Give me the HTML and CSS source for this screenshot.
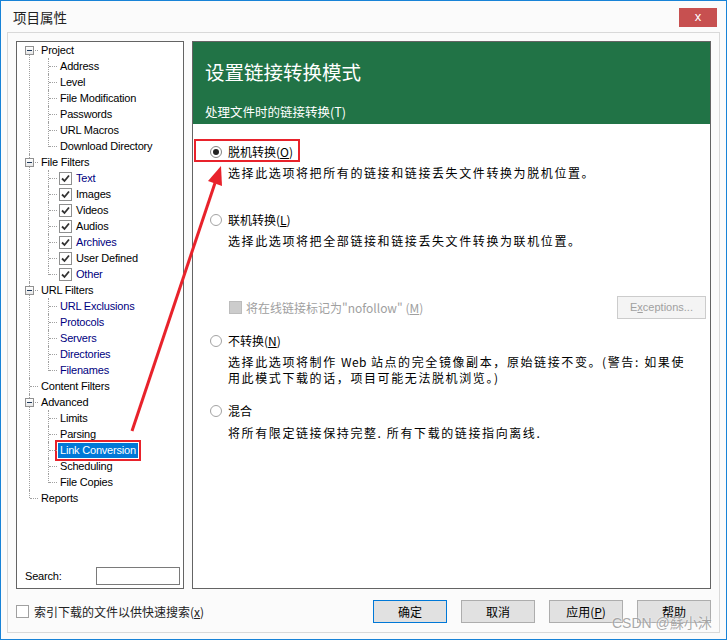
FILE: index.html
```html
<!DOCTYPE html>
<html lang="zh-CN">
    <head>
        <meta charset="UTF-8">
        <meta name="viewport" content="width=device-width, initial-scale=1.0">
        <title>项目属性</title>
        <link rel="stylesheet" href="styles.css">
    </head>
    <body>
        <div class="window">
            <div class="titlebar">
                <span class="title">项目属性</span>
                <span class="close">x</span>
            </div>
            <div class="frame">
                <div class="panes">
                    <div class="tree-box">
                        <ul class="tree">
                            <li><div class="row"><span class="exp"></span><span class="lbl">Project</span></div>
                                <ul class="kids">
                                    <li><span class="lbl">Address</span></li>
                                    <li><span class="lbl">Level</span></li>
                                    <li><span class="lbl">File Modification</span></li>
                                    <li><span class="lbl">Passwords</span></li>
                                    <li><span class="lbl">URL Macros</span></li>
                                    <li><span class="lbl">Download Directory</span></li>
                                </ul>
                            </li>
                            <li><div class="row"><span class="exp"></span><span class="lbl">File Filters</span></div>
                                <ul class="kids">
                                    <li class="chk"><span class="cb"></span><span class="lbl blue">Text</span></li>
                                    <li class="chk"><span class="cb"></span><span class="lbl">Images</span></li>
                                    <li class="chk"><span class="cb"></span><span class="lbl">Videos</span></li>
                                    <li class="chk"><span class="cb"></span><span class="lbl">Audios</span></li>
                                    <li class="chk"><span class="cb"></span><span class="lbl blue">Archives</span></li>
                                    <li class="chk"><span class="cb"></span><span class="lbl">User Defined</span></li>
                                    <li class="chk"><span class="cb"></span><span class="lbl blue">Other</span></li>
                                </ul>
                            </li>
                            <li><div class="row"><span class="exp"></span><span class="lbl">URL Filters</span></div>
                                <ul class="kids">
                                    <li><span class="lbl blue">URL Exclusions</span></li>
                                    <li><span class="lbl blue">Protocols</span></li>
                                    <li><span class="lbl blue">Servers</span></li>
                                    <li><span class="lbl blue">Directories</span></li>
                                    <li><span class="lbl blue">Filenames</span></li>
                                </ul>
                            </li>
                            <li><div class="row"><span class="lbl">Content Filters</span></div></li>
                            <li><div class="row"><span class="exp"></span><span class="lbl">Advanced</span></div>
                                <ul class="kids">
                                    <li><span class="lbl">Limits</span></li>
                                    <li><span class="lbl">Parsing</span></li>
                                    <li><span class="lbl selected">Link Conversion</span></li>
                                    <li><span class="lbl">Scheduling</span></li>
                                    <li><span class="lbl">File Copies</span></li>
                                </ul>
                            </li>
                            <li><div class="row"><span class="lbl">Reports</span></div></li>
                        </ul>
                        <div class="search">
                            <span>Search:</span>
                            <span class="search-input"></span>
                        </div>
                    </div>
                    <div class="page">
                        <div class="page-head">
                            <div class="page-title">设置链接转换模式</div>
                            <div class="page-sub">处理文件时的链接转换(T)</div>
                        </div>
                        <div class="options">
                            <div class="opt opt1"><span class="radio on"></span>脱机转换(<u>O</u>)</div>
                            <div class="desc d1">选择此选项将把所有的链接和链接丢失文件转换为脱机位置。</div>
                            <div class="opt opt2"><span class="radio"></span>联机转换(<u>L</u>)</div>
                            <div class="desc d2">选择此选项将把全部链接和链接丢失文件转换为联机位置。</div>
                            <div class="nofollow">
                                <span class="nf-label"><span class="cb-off"></span>将在线链接标记为"nofollow" (<u>M</u>)</span>
                                <span class="btn-off">E<u>x</u>ceptions...</span>
                            </div>
                            <div class="opt opt3"><span class="radio"></span>不转换(<u>N</u>)</div>
                            <div class="desc d3">选择此选项将制作 <span class="latin">Web</span> 站点的完全镜像副本，原始链接不变。(警告: 如果使<br>用此模式下载的话，项目可能无法脱机浏览。)</div>
                            <div class="opt opt4"><span class="radio"></span>混合</div>
                            <div class="desc d4">将所有限定链接保持完整. 所有下载的链接指向离线.</div>
                        </div>
                    </div>
                </div>
                <div class="footer">
                    <span class="index-chk"><span class="cb-empty"></span>索引下载的文件以供快速搜索(<u>x</u>)</span>
                    <div class="buttons">
                        <span class="btn focus">确定</span>
                        <span class="btn">取消</span>
                        <span class="btn">应用(<u>P</u>)</span>
                        <span class="btn">帮助</span>
                    </div>
                </div>
            </div>
        </div>
        <!-- annotations -->
        <div class="mark-box"></div>
        <svg class="arrow" width="727" height="640" viewBox="0 0 727 640">
            <line x1="132" y1="431" x2="215" y2="183" stroke="#e8222b" stroke-width="3"/>
            <polygon points="221,166 222,186 208,181" fill="#e8222b"/>
        </svg>
        <div class="watermark">CSDN @蘇小沐</div>
    </body>
</html>
```

FILE: styles.css
```css
*{
    margin: 0;
    padding: 0;
    box-sizing: border-box;
}
li{
    list-style: none;
}
body{
    width: 727px;
    height: 640px;
    overflow: hidden;
    position: relative;
    font-family: "Noto Sans CJK SC", sans-serif;
    font-size: 12px;
    color: #000;
    background: #fff;
}
.window{
    width: 727px;
    height: 640px;
    border: 1px solid #1883d7;
    background: #fbfbfb;
    display: flex;
    flex-direction: column;
}
.titlebar{
    height: 31px;
    display: flex;
    align-items: center;
    justify-content: space-between;
    padding-left: 12px;
}
.title{
    font-size: 13.5px;
    line-height: 20px;
    color: #222;
}
.close{
    width: 38px;
    height: 19px;
    margin-right: 9px;
    margin-top: 1px;
    background: #c75050;
    color: #fff;
    font-family: "Liberation Sans", sans-serif;
    font-size: 13px;
    line-height: 18px;
    text-align: center;
}
.frame{
    flex: 1;
    margin: 0 6px 6px 6px;
    border: 1px solid #d9d9d9;
    display: flex;
    flex-direction: column;
    padding: 8px 8px 9px 8px;
}
.panes{
    height: 548px;
    display: flex;
    gap: 8px;
}
/* tree */
.tree-box{
    width: 168px;
    height: 548px;
    border: 1px solid #646464;
    background: #fff;
    display: flex;
    flex-direction: column;
    font-family: "Liberation Sans", sans-serif;
    font-size: 11px;
    letter-spacing: -0.2px;
}
.tree{
    flex: 1;
}
.tree li{
    position: relative;
}
.tree > li{
    padding-left: 22px;
}
.tree > li::after{
    content: "";
    position: absolute;
    left: 12px;
    top: 0;
    bottom: 0;
    border-left: 1px dotted #a0a0a0;
}
.tree > li:first-child::after{
    top: 8px;
}
.tree > li:last-child::after{
    bottom: auto;
    height: 8px;
}
.tree > li::before{
    content: "";
    position: absolute;
    left: 13px;
    top: 8px;
    width: 8px;
    border-top: 1px dotted #a0a0a0;
}
.row{
    height: 16px;
    display: flex;
    align-items: center;
}
.exp{
    position: absolute;
    left: 8px;
    top: 4px;
    width: 9px;
    height: 9px;
    border: 1px solid #919191;
    background: linear-gradient(#fff, #e6e6e6);
    z-index: 2;
}
.exp::after{
    content: "";
    position: absolute;
    left: 1px;
    top: 3px;
    width: 5px;
    height: 1px;
    background: #1e395b;
}
.lbl{
    display: inline-block;
    height: 16px;
    line-height: 16px;
    padding: 0 2px;
    white-space: nowrap;
}
.lbl.blue{
    color: #000080;
}
.lbl.selected{
    background: #0078d7;
    color: #fff;
    height: 15px;
    line-height: 15px;
    margin-top: 1px;
    outline: 2px solid #e8222b;
    outline-offset: 1px;
}
.kids li{
    height: 16px;
    padding-left: 19px;
    display: flex;
    align-items: center;
}
.kids li::after{
    content: "";
    position: absolute;
    left: 9px;
    top: 0;
    bottom: 0;
    border-left: 1px dotted #a0a0a0;
}
.kids li:last-child::after{
    bottom: auto;
    height: 9px;
}
.kids li::before{
    content: "";
    position: absolute;
    left: 10px;
    top: 8px;
    width: 8px;
    border-top: 1px dotted #a0a0a0;
}
.kids li.chk{
    padding-left: 20px;
}
.kids li.chk .lbl{
    margin-left: 2px;
}
.cb{
    width: 13px;
    height: 13px;
    border: 1px solid #8e8f8f;
    background: #fff url("data:image/svg+xml,%3Csvg xmlns='http://www.w3.org/2000/svg' width='11' height='11'%3E%3Cpath d='M2 5.5 L4.5 8 L9 2.5' fill='none' stroke='%23333' stroke-width='1.8'/%3E%3C/svg%3E") no-repeat center;
    flex-shrink: 0;
}
.search{
    height: 18px;
    margin: 0 3px 3px 8px;
    display: flex;
    align-items: center;
    justify-content: space-between;
}
.search-input{
    width: 84px;
    height: 18px;
    border: 1px solid #7a7a7a;
    background: #fff;
}
/* right page */
.page{
    width: 519px;
    height: 548px;
    border: 1px solid #646464;
    background: #fff;
}
.page-head{
    height: 82px;
    background: #217346;
    color: #fff;
    padding: 18px 12px 0 12px;
}
.page-title{
    font-size: 19.5px;
    line-height: 24px;
}
.page-sub{
    margin-top: 20px;
    font-size: 12.5px;
    line-height: 16px;
}
.opt{
    height: 16px;
    display: flex;
    align-items: center;
    padding-left: 17px;
    line-height: 16px;
}
.radio{
    width: 12px;
    height: 12px;
    border: 1px solid #a3a3a3;
    border-radius: 50%;
    background: #fff;
    margin-right: 6px;
    position: relative;
}
.radio.on{
    border-color: #848484;
}
.radio.on::after{
    content: "";
    position: absolute;
    left: 2px;
    top: 2px;
    width: 6px;
    height: 6px;
    border-radius: 50%;
    background: #222;
}
.desc{
    padding-left: 35px;
    line-height: 16px;
    letter-spacing: 1.6px;
    white-space: nowrap;
}
.desc .latin{
    letter-spacing: 0.3px;
}
.opt1{ margin-top: 20px; }
.d1{ margin-top: 5px; }
.opt2{ margin-top: 31px; }
.d2{ margin-top: 5px; }
.opt3{ margin-top: 14px; }
.d3{ margin-top: 5px; }
.opt4{ margin-top: 17px; }
.d4{ margin-top: 6px; }
.nofollow{
    margin-top: 47px;
    height: 23px;
    display: flex;
    align-items: center;
    justify-content: space-between;
    padding-left: 36px;
    padding-right: 4px;
}
.nf-label{
    display: flex;
    align-items: center;
    color: #a0a0a0;
}
.cb-off{
    width: 13px;
    height: 13px;
    border: 1px solid #bcbcbc;
    background: #cccccc;
    margin-right: 4px;
}
.btn-off{
    width: 89px;
    height: 23px;
    border: 1px solid #cccccc;
    background: #f4f4f4;
    color: #a0a0a0;
    font-family: "Liberation Sans", sans-serif;
    font-size: 11px;
    line-height: 21px;
    text-align: center;
}
/* footer */
.footer{
    margin-top: 11px;
    height: 23px;
    display: flex;
    align-items: center;
    justify-content: space-between;
}
.index-chk{
    display: flex;
    align-items: center;
    color: #222;
}
.cb-empty{
    width: 13px;
    height: 13px;
    border: 1px solid #a0a0a0;
    background: #fff;
    margin-right: 5px;
}
.buttons{
    display: flex;
    gap: 14px;
}
.btn{
    width: 74px;
    height: 23px;
    border: 1px solid #adadad;
    background: #e1e1e1;
    text-align: center;
    line-height: 21px;
}
.btn.focus{
    border-color: #0078d7;
}
/* annotations */
.mark-box{
    position: absolute;
    left: 194px;
    top: 139px;
    width: 106px;
    height: 23px;
    border: 2px solid #e8222b;
}
.arrow{
    position: absolute;
    left: 0;
    top: 0;
    pointer-events: none;
}
.watermark{
    position: absolute;
    left: 612px;
    top: 613px;
    font-family: "Liberation Sans", "Noto Sans CJK SC", sans-serif;
    font-size: 14px;
    line-height: 20px;
    color: rgba(140, 140, 140, 0.75);
    text-shadow: 0 0 2px #fff;
    white-space: nowrap;
}
```
